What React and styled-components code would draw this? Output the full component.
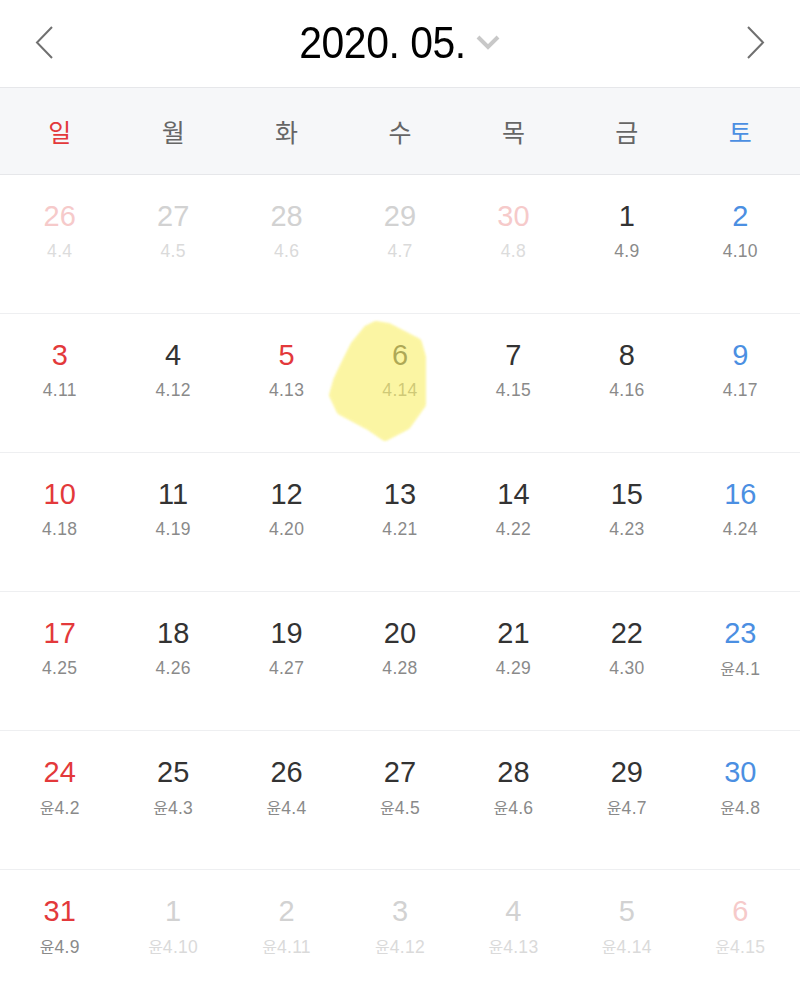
import React from "react"
import styled, { createGlobalStyle } from "styled-components"

const GlobalStyle = createGlobalStyle`
  html, body {
    margin: 0;
    padding: 0;
    background: #fff;
  }
  body {
    font-family: "Liberation Sans", "Noto Sans CJK KR", sans-serif;
  }
`

const Page = styled.div`
  width: 800px;
  height: 992px;
  overflow: hidden;
  background: #fff;
`

const Header = styled.div`
  height: 87px;
  display: flex;
  align-items: center;
  justify-content: space-between;
  padding: 0 30px;
  border-bottom: solid 1px #e6e7ea;
`

const NavButton = styled.button`
  border: none;
  background: transparent;
  padding: 0;
  width: 30px;
  height: 40px;
  display: flex;
  align-items: center;
  justify-content: center;
  cursor: pointer;
  margin-top: -1px;
`

const Title = styled.div`
  display: flex;
  align-items: center;
  gap: 9px;
  margin-top: -2px;
  margin-left: 2px;

  .label {
    display: inline-block;
    font-family: "Liberation Sans", sans-serif;
    font-size: 44px;
    color: #000;
    letter-spacing: -0.5px;
    transform: scaleX(0.93);
    margin: 0 -6px;
  }
`

const WeekBar = styled.div`
  height: 86px;
  background: #f6f7f9;
  border-bottom: solid 1px #e6e7ea;
  display: grid;
  grid-template-columns: repeat(7, 1fr);
  padding: 0 3px;
  align-items: center;
`

const WeekDay = styled.div`
  text-align: center;
  font-family: "Noto Sans CJK KR", sans-serif;
  font-size: 25px;
  color: ${(props) => props.color};
  margin-top: -1px;
`

const Grid = styled.div`
  display: grid;
  grid-template-columns: repeat(7, 1fr);
  grid-auto-rows: 139px;
  padding: 0 3px;
`

const Cell = styled.div`
  position: relative;
  border-bottom: solid 1px #eeeff1;
  margin: 0 -3px;
  padding: 24px 3px 0;
  display: flex;
  flex-direction: column;
  align-items: center;
`

const DayNum = styled.div`
  position: relative;
  font-size: 29px;
  line-height: 34px;
  color: ${(props) => props.color};
`

const Lunar = styled.div`
  position: relative;
  margin-top: 8px;
  font-family: "Liberation Sans", "Noto Sans CJK KR", sans-serif;
  font-size: 17.5px;
  letter-spacing: 0.3px;
  line-height: 20px;
  color: ${(props) => props.color};

  .yun {
    font-family: "Noto Sans CJK KR", sans-serif;
    font-size: 16px;
    letter-spacing: 0;
  }
`

const Highlight = styled.svg`
  position: absolute;
  left: -14px;
  top: 5px;
  z-index: 2;
  opacity: 0.62;
  filter: blur(0.8px);
  pointer-events: none;
`

const RED = "#e3393b"
const BLUE = "#4b8fe2"
const DARK = "#333"
const GRAY = "#8a8a8a"

const weekDays = [
  { label: "일", color: RED },
  { label: "월", color: "#666" },
  { label: "화", color: "#666" },
  { label: "수", color: "#666" },
  { label: "목", color: "#666" },
  { label: "금", color: "#666" },
  { label: "토", color: BLUE },
]

const lunar = [
  "4.4", "4.5", "4.6", "4.7", "4.8", "4.9", "4.10",
  "4.11", "4.12", "4.13", "4.14", "4.15", "4.16", "4.17",
  "4.18", "4.19", "4.20", "4.21", "4.22", "4.23", "4.24",
  "4.25", "4.26", "4.27", "4.28", "4.29", "4.30", "윤4.1",
  "윤4.2", "윤4.3", "윤4.4", "윤4.5", "윤4.6", "윤4.7", "윤4.8",
  "윤4.9", "윤4.10", "윤4.11", "윤4.12", "윤4.13", "윤4.14", "윤4.15",
]

const days = [26, 27, 28, 29, 30]
for (let d = 1; d <= 31; d++) days.push(d)
for (let d = 1; d <= 6; d++) days.push(d)

// 5월 5일 어린이날
const holidays = [5]

function dayColors(index, day) {
  const col = index % 7
  const outside = index < 5 || index > 35
  if (outside) {
    if (col === 0 || (index < 5 && col === 4) || (col === 6 && index > 35)) {
      return { num: "#f6caca", sub: "#dcdcdc" }
    }
    return { num: "#d2d2d2", sub: "#dadada" }
  }
  if (col === 0 || holidays.includes(day)) return { num: RED, sub: GRAY }
  if (col === 6) return { num: BLUE, sub: GRAY }
  return { num: DARK, sub: GRAY }
}

function LunarText({ text, color }) {
  if (text.startsWith("윤")) {
    return (
      <Lunar color={color}>
        <span className="yun">윤</span>
        {text.slice(1)}
      </Lunar>
    )
  }
  return <Lunar color={color}>{text}</Lunar>
}

export default function App() {
  return (
    <Page>
      <GlobalStyle />
      <Header>
        <NavButton aria-label="이전 달">
          <svg width="22" height="36" viewBox="0 0 22 36">
            <polyline
              points="18,2 3,17.5 18,33"
              fill="none"
              stroke="#707070"
              strokeWidth="2"
            />
          </svg>
        </NavButton>
        <Title>
          <span className="label">2020. 05.</span>
          <svg width="28" height="20" viewBox="0 0 28 20">
            <polyline
              points="3,4 13,14 23,4"
              fill="none"
              stroke="#c8c8c8"
              strokeWidth="4"
            />
          </svg>
        </Title>
        <NavButton aria-label="다음 달">
          <svg width="22" height="36" viewBox="0 0 22 36">
            <polyline
              points="4,2 19,17.5 4,33"
              fill="none"
              stroke="#707070"
              strokeWidth="2"
            />
          </svg>
        </NavButton>
      </Header>
      <WeekBar>
        {weekDays.map((w) => (
          <WeekDay key={w.label} color={w.color}>
            {w.label}
          </WeekDay>
        ))}
      </WeekBar>
      <Grid>
        {days.map((day, index) => {
          const c = dayColors(index, day)
          return (
            <Cell key={index}>
              <DayNum color={c.num}>{day}</DayNum>
              <LunarText text={lunar[index]} color={c.sub} />
              {index === 10 && (
                <Highlight width="106" height="128" viewBox="0 0 106 128">
                  <path
                    d="M50,7 L62,9 L91,24 L95,38 L95,85 L80,106 L59,117 L43,106 L15,91 L8,76 L12,62 L20,45 L29,27 L42,11 Z"
                    fill="#faf06c"
                    stroke="#faf06c"
                    strokeWidth="10"
                    strokeLinejoin="round"
                  />
                </Highlight>
              )}
            </Cell>
          )
        })}
      </Grid>
    </Page>
  )
}
